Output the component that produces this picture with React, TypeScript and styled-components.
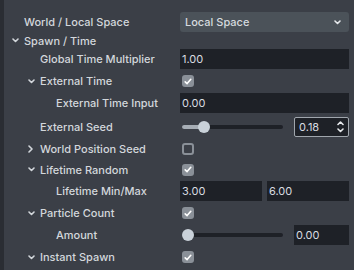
import React from "react";
import styled, { createGlobalStyle } from "styled-components";

const Global = createGlobalStyle`
  html, body { margin: 0; padding: 0; background: #3b3f47; }
  body { font-family: Inter, "Liberation Sans", Arial, sans-serif; }
  * { box-sizing: border-box; }
`;

const Shell = styled.div`
  display: flex;
  width: 354px;
  height: 270px;
  overflow: hidden;
  background: #3b3f47;
`;

const Strip = styled.div`
  width: 4px;
  flex: none;
  background: #2a2d33;
`;

const Panel = styled.div`
  flex: 1;
  display: flex;
  flex-direction: column;
  padding-top: 4px;
`;

const Divider = styled.div`
  height: 1px;
  margin-left: 9px;
  margin-bottom: 7px;
  background: #4c515a;
`;

const Row = styled.div<{ $h?: number }>`
  display: grid;
  grid-template-columns: 176px 1fr;
  align-items: center;
  height: ${(p) => p.$h ?? 22}px;
  padding-right: 8px;
  flex: none;
`;

const Label = styled.div<{ $level: number }>`
  display: flex;
  align-items: center;
  padding-left: ${(p) => 8 + p.$level * 16}px;
  color: #d3d7dc;
  font-size: 11px;
  font-weight: 500;
  white-space: nowrap;
`;

const ChevSlot = styled.span`
  width: 12px;
  flex: none;
  display: flex;
  align-items: center;
`;

const Controls = styled.div`
  display: flex;
  align-items: center;
  gap: 5px;
  height: 100%;
`;

const Select = styled.div`
  flex: 1;
  height: 20px;
  border-radius: 3px;
  background: #4b5259;
  display: flex;
  align-items: center;
  justify-content: space-between;
  padding: 0 8px 0 5px;
  color: #d6dadf;
  font-size: 11px;
  font-weight: 500;
`;

const TextField = styled.div<{ $w?: number }>`
  ${(p) => (p.$w ? `width: ${p.$w}px; flex: none;` : "flex: 1;")}
  height: 20px;
  background: #1e2127;
  display: flex;
  align-items: center;
  padding-left: 2px;
  color: #d8dce0;
  font-size: 11px;
`;

const SpinField = styled.div`
  width: 55px;
  flex: none;
  height: 20px;
  background: #1e2127;
  border: 1px solid #a0a6ad;
  border-radius: 2px;
  display: flex;
  align-items: center;
  justify-content: space-between;
  padding: 0 4px 0 4px;
  color: #d8dce0;
  font-size: 11px;
`;

const SpinArrows = styled.div`
  display: flex;
  flex-direction: column;
  gap: 2px;
`;

const Check = styled.div<{ $on: boolean }>`
  width: 12px;
  height: 12px;
  margin-left: 2px;
  border-radius: 3px;
  background: ${(p) => (p.$on ? "#8a9098" : "transparent")};
  border: ${(p) => (p.$on ? "none" : "2px solid #8a9098")};
  display: flex;
  align-items: center;
  justify-content: center;
`;

const SliderBox = styled.div`
  position: relative;
  width: 101px;
  margin-left: 2px;
  margin-right: 6px;
  height: 14px;
  flex: none;
  display: flex;
  align-items: center;
`;

const Track = styled.div`
  width: 100%;
  height: 4px;
  border-radius: 2px;
  background: #1e2127;
  overflow: hidden;
`;

const Fill = styled.div`
  height: 100%;
  background: #a6adb5;
`;

const Thumb = styled.div`
  position: absolute;
  top: 1px;
  width: 12px;
  height: 12px;
  margin-left: -6px;
  border-radius: 50%;
  background: #c9d1d9;
`;

const Chevron = ({ dir, color = "#d3d7dc", w = 7 }: { dir: "down" | "right" | "up"; color?: string; w?: number }) => {
  if (dir === "right")
    return (
      <svg width="5" height="8" viewBox="0 0 5 8">
        <path d="M1 1 L4 4 L1 7" fill="none" stroke={color} strokeWidth="1.6" strokeLinecap="round" strokeLinejoin="round" />
      </svg>
    );
  const d = dir === "down" ? "M1 1 L3.5 3.5 L6 1" : "M1 3.5 L3.5 1 L6 3.5";
  return (
    <svg width={w} height="5" viewBox="0 0 7 5">
      <path d={d} fill="none" stroke={color} strokeWidth="1.6" strokeLinecap="round" strokeLinejoin="round" />
    </svg>
  );
};

const Tick = () => (
  <svg width="8" height="7" viewBox="0 0 8 7">
    <path d="M1.2 3.8 L3.1 5.6 L6.8 1.3" fill="none" stroke="#ffffff" strokeWidth="1.6" strokeLinecap="round" strokeLinejoin="round" />
  </svg>
);

type Exp = "down" | "right" | undefined;

const Lbl = ({ level, exp, children }: { level: number; exp?: Exp; children: React.ReactNode }) => (
  <Label $level={level}>
    <ChevSlot>{exp && <Chevron dir={exp} />}</ChevSlot>
    {children}
  </Label>
);

const Slider = ({ value }: { value: number }) => (
  <SliderBox>
    <Track>
      <Fill style={{ width: `${value * 100}%` }} />
    </Track>
    <Thumb style={{ left: `${value * 100}%`, marginLeft: value === 0 ? 0 : -6 }} />
  </SliderBox>
);

export default function App() {
  return (
    <>
      <Global />
      <Shell>
        <Strip />
        <Panel>
          <Divider />
          <Row>
            <Lbl level={0}>World / Local Space</Lbl>
            <Controls>
              <Select>
                Local Space
                <Chevron dir="down" color="#e6e9ec" />
              </Select>
            </Controls>
          </Row>
          <Row $h={15}>
            <Lbl level={0} exp="down">Spawn / Time</Lbl>
          </Row>
          <Row>
            <Lbl level={1}>Global Time Multiplier</Lbl>
            <Controls>
              <TextField>1.00</TextField>
            </Controls>
          </Row>
          <Row>
            <Lbl level={1} exp="down">External Time</Lbl>
            <Controls>
              <Check $on><Tick /></Check>
            </Controls>
          </Row>
          <Row>
            <Lbl level={2}>External Time Input</Lbl>
            <Controls>
              <TextField>0.00</TextField>
            </Controls>
          </Row>
          <Row $h={25}>
            <Lbl level={1}>External Seed</Lbl>
            <Controls>
              <Slider value={0.22} />
              <SpinField>
                0.18
                <SpinArrows>
                  <Chevron dir="up" color="#e6e9ec" />
                  <Chevron dir="down" color="#e6e9ec" />
                </SpinArrows>
              </SpinField>
            </Controls>
          </Row>
          <Row $h={20}>
            <Lbl level={1} exp="right">World Position Seed</Lbl>
            <Controls>
              <Check $on={false} />
            </Controls>
          </Row>
          <Row $h={21}>
            <Lbl level={1} exp="down">Lifetime Random</Lbl>
            <Controls>
              <Check $on><Tick /></Check>
            </Controls>
          </Row>
          <Row>
            <Lbl level={2}>Lifetime Min/Max</Lbl>
            <Controls>
              <TextField>3.00</TextField>
              <TextField>6.00</TextField>
            </Controls>
          </Row>
          <Row>
            <Lbl level={1} exp="down">Particle Count</Lbl>
            <Controls>
              <Check $on><Tick /></Check>
            </Controls>
          </Row>
          <Row>
            <Lbl level={2}>Amount</Lbl>
            <Controls>
              <Slider value={0} />
              <TextField $w={55}>0.00</TextField>
            </Controls>
          </Row>
          <Row>
            <Lbl level={1} exp="down">Instant Spawn</Lbl>
            <Controls>
              <Check $on><Tick /></Check>
            </Controls>
          </Row>
          <Row $h={16}>
            <Lbl level={0} exp="down">Spawn Location / Shape</Lbl>
          </Row>
        </Panel>
      </Shell>
    </>
  );
}
